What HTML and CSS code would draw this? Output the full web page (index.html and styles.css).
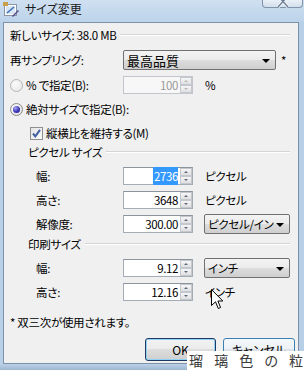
FILE: index.html
```html
<!DOCTYPE html>
<html lang="ja">
<head>
<meta charset="utf-8">
<title>サイズ変更</title>
<link rel="stylesheet" href="styles.css">
</head>
<body>
<div class="window">
	<!-- タイトルバー -->
	<div class="titlebar">
		<svg class="appicon" width="17" height="16" viewBox="0 0 17 16">
			<rect x="1.5" y="2.5" width="12" height="11" fill="#fdfdfd" stroke="#8a96a6"/>
			<rect x="3" y="4" width="9" height="8" fill="#d9e6f3"/>
			<path d="M4 11 L11 5" stroke="#3d6fb8" stroke-width="1.6"/>
			<path d="M9 14 L15 8 L16 9 L10 15 Z" fill="#5a4a8a"/>
			<rect x="0" y="0" width="5" height="4" fill="#c9a14a"/>
		</svg>
		<span class="title">サイズ変更</span>
		<div class="closebtn">
			<svg width="12" height="8" viewBox="0 0 12 8">
				<path d="M1 -4 L11 7 M11 -4 L1 7" stroke="#f4f7fb" stroke-width="3.2"/>
				<path d="M1 -4 L11 7 M11 -4 L1 7" stroke="#6f7f95" stroke-width="1.4"/>
			</svg>
		</div>
	</div>
	<!-- ダイアログ本体 -->
	<div class="client">
		<div class="row">
			<span class="info">新しいサイズ: 38.0 MB</span>
			<span class="rule"></span>
		</div>
		<div class="row loose">
			<span class="label">再サンプリング:</span>
			<div class="combo wide"><span class="text">最高品質</span><i class="arrow"></i></div>
			<span class="star">*</span>
		</div>
		<div class="row loose">
			<span class="label"><i class="radio off"></i>% で指定(B):</span>
			<div class="spin disabled">
				<span class="value">100</span>
				<span class="spinbtns"><i class="up"></i><i class="down"></i></span>
			</div>
			<span class="unit">%</span>
		</div>
		<div class="row">
			<span class="label"><i class="radio on"></i>絶対サイズで指定(B):</span>
		</div>
		<div class="row">
			<span class="label check-label"><i class="checkbox">
				<svg width="11" height="11" viewBox="0 0 11 11"><path d="M2 5.5 L4.3 8.3 L9 1.8" fill="none" stroke="#3f5fa0" stroke-width="2"/></svg>
			</i>縦横比を維持する(M)</span>
		</div>
		<div class="group first">
			<span>ピクセル サイズ</span>
			<span class="rule"></span>
		</div>
		<div class="row">
			<span class="label sub">幅:</span>
			<div class="spin">
				<span class="value"><em class="sel">2736</em></span>
				<span class="spinbtns"><i class="up"></i><i class="down"></i></span>
			</div>
			<span class="unit">ピクセル</span>
		</div>
		<div class="row">
			<span class="label sub">高さ:</span>
			<div class="spin">
				<span class="value">3648</span>
				<span class="spinbtns"><i class="up"></i><i class="down"></i></span>
			</div>
			<span class="unit">ピクセル</span>
		</div>
		<div class="row">
			<span class="label sub">解像度:</span>
			<div class="spin">
				<span class="value">300.00</span>
				<span class="spinbtns"><i class="up"></i><i class="down"></i></span>
			</div>
			<div class="combo small"><span class="text">ピクセル/インチ</span><i class="arrow"></i></div>
		</div>
		<div class="group">
			<span>印刷サイズ</span>
			<span class="rule"></span>
		</div>
		<div class="row">
			<span class="label sub">幅:</span>
			<div class="spin">
				<span class="value">9.12</span>
				<span class="spinbtns"><i class="up"></i><i class="down"></i></span>
			</div>
			<div class="combo small"><span class="text">インチ</span><i class="arrow"></i></div>
		</div>
		<div class="row">
			<span class="label sub">高さ:</span>
			<div class="spin">
				<span class="value">12.16</span>
				<span class="spinbtns"><i class="up"></i><i class="down"></i></span>
			</div>
			<span class="unit">インチ</span>
		</div>
		<div class="row note">* 双三次が使用されます。</div>
		<div class="buttons">
			<div class="button default">OK</div>
			<div class="button focus">キャンセル</div>
		</div>
	</div>
	<div class="frame-bottom"></div>
</div>

<!-- 透かし文字とマウスカーソル -->
<div class="watermark">瑠 璃 色 の 粒</div>
<svg class="cursor" width="13" height="21" viewBox="0 0 13 21">
	<path d="M0.5 0.5 L0.5 16.5 L4.5 12.8 L7.3 19.5 L9.6 18.5 L6.9 12 L11.8 12 Z" fill="#fff" stroke="#000" stroke-width="1"/>
</svg>
</body>
</html>
```

FILE: styles.css
```css
/* 全体 */
body {
	margin: 0;
	font-family: "Noto Sans CJK JP", sans-serif;
	font-size: 11.5px;
	letter-spacing: -0.3px;
	font-feature-settings: "palt";
	color: #000;
}
.window {
	width: 304px;
	height: 370px;
	background: linear-gradient(90deg, #b9d0e8, #c4d8ed 60%, #b7cee7);
	display: flex;
	flex-direction: column;
	overflow: hidden;
}
/* タイトルバー */
.titlebar {
	height: 22px;
	display: flex;
	align-items: flex-start;
	background: linear-gradient(180deg, #cfe0f1, #bcd3ea);
}
.appicon {
	margin: 2px 0 0 3px;
}
.title {
	margin: 1px 0 0 5px;
	line-height: 16px;
	font-size: 12px;
	letter-spacing: 0;
	color: #1a1a1a;
}
.closebtn {
	margin-left: auto;
	margin-right: 1px;
	width: 41px;
	height: 8px;
	box-sizing: border-box;
	border: 1px solid #8193ab;
	border-top: none;
	border-radius: 0 0 4px 4px;
	background: linear-gradient(180deg, #e9f0f7, #d3dfec);
	display: flex;
	justify-content: center;
}
/* 本体 */
.client {
	margin: 0 5px 0 3px;
	height: 338px;
	border: 1px solid #7d91a8;
	background-color: #f0f0f0;
	padding: 2px 8px 0 6px;
	display: flex;
	flex-direction: column;
}
.frame-bottom {
	flex: 1;
	background: linear-gradient(180deg, #bcd2e9, #9fb7d0);
}
.row {
	height: 20px;
	margin-top: 4px;
	display: flex;
	align-items: center;
	white-space: nowrap;
}
.row:first-child {
	margin-top: 0;
}
.row.loose {
	margin-top: 5px;
}
.row.note {
	margin-top: 10px;
}
.rule {
	flex: 1;
	height: 0;
	border-top: 1px solid #d5d5d5;
	border-bottom: 1px solid #fff;
	margin-left: 4px;
}
.label {
	width: 113px;
	flex: none;
	display: flex;
	align-items: center;
}
.label.sub {
	padding-left: 26px;
	box-sizing: border-box;
}
.check-label {
	width: auto;
	padding-left: 20px;
}
.star {
	margin-left: 5px;
}
.unit {
	margin-left: 12px;
}
/* グループ見出し */
.group {
	height: 16px;
	margin: 2px 0 2px 18px;
	display: flex;
	align-items: center;
	white-space: nowrap;
}
.group.first {
	margin-top: 1px;
}
/* ラジオボタン */
.radio {
	width: 11px;
	height: 11px;
	border: 1px solid #8a8a8a;
	border-radius: 50%;
	margin-right: 3px;
	background: radial-gradient(circle at 40% 35%, #ffffff, #dcdcdc);
	position: relative;
	flex: none;
}
.radio.off {
	border-color: #b5b5b5;
	background: radial-gradient(circle at 40% 35%, #fafafa, #e6e6e6);
}
.radio.on::after {
	content: "";
	position: absolute;
	left: 2px;
	top: 2px;
	width: 7px;
	height: 7px;
	border-radius: 50%;
	background: radial-gradient(circle at 35% 30%, #a7a4f2, #3a36b8 55%, #1d1a7a);
}
/* チェックボックス */
.checkbox {
	width: 11px;
	height: 11px;
	border: 1px solid #8f8f8f;
	background: linear-gradient(135deg, #e4e4e4, #fbfbfb);
	margin-right: 3px;
	display: flex;
	flex: none;
}
/* コンボボックス */
.combo {
	height: 20px;
	box-sizing: border-box;
	border: 1px solid #707070;
	border-radius: 2px;
	background: linear-gradient(180deg, #f3f3f3 0%, #ebebeb 50%, #dddddd 50%, #cfcfcf 100%);
	display: flex;
	align-items: center;
	overflow: hidden;
	flex: none;
}
.combo.wide {
	width: 153px;
}
.combo.small {
	width: 86px;
	margin-left: 11px;
}
.combo .text {
	flex: 1;
	padding-left: 3px;
	overflow: hidden;
	white-space: nowrap;
}
.combo.wide .text {
	font-size: 13px;
	letter-spacing: 0;
}
.arrow {
	width: 0;
	height: 0;
	border-left: 4px solid transparent;
	border-right: 4px solid transparent;
	border-top: 4px solid #000;
	margin: 1px 5px 0 2px;
	flex: none;
}
/* スピン付きテキストボックス */
.spin {
	width: 70px;
	height: 18px;
	box-sizing: border-box;
	border: 1px solid #a4acb6;
	border-top-color: #8c949e;
	background-color: #fff;
	display: flex;
	flex: none;
}
.spin .value {
	flex: 1;
	text-align: right;
	padding-right: 1px;
	font-size: 11.5px;
	line-height: 16px;
	letter-spacing: -0.4px;
}
.spin .sel {
	font-style: normal;
	background-color: #3399ff;
	color: #fff;
	padding: 1px 0 1px 1px;
}
.spin.disabled {
	border-color: #c2c6cc;
	background-color: #f7f7f7;
	color: #9a9a9a;
}
.spinbtns {
	width: 12px;
	display: flex;
	flex-direction: column;
	margin-left: 1px;
}
.spinbtns i {
	flex: 1;
	border: 1px solid #c3c8ce;
	background: linear-gradient(180deg, #f6f6f6, #e0e0e0);
	display: flex;
	justify-content: center;
	align-items: center;
}
.spinbtns i::after {
	content: "";
	border-left: 2px solid transparent;
	border-right: 2px solid transparent;
}
.spinbtns .up::after {
	border-bottom: 2px solid #5a6b80;
}
.spinbtns .down::after {
	border-top: 2px solid #5a6b80;
}
.spin.disabled .spinbtns i::after {
	border-top-color: #b8b8b8;
	border-bottom-color: #b8b8b8;
}
/* ボタン */
.buttons {
	margin-top: 6px;
	height: 23px;
	display: flex;
	justify-content: flex-end;
	gap: 7px;
	margin-right: -5px;
}
.button {
	width: 71px;
	box-sizing: border-box;
	border: 1px solid #707070;
	border-radius: 3px;
	background: linear-gradient(180deg, #f2f2f2 0%, #ebebeb 50%, #dddddd 50%, #cfcfcf 100%);
	text-align: center;
	line-height: 21px;
	font-size: 12px;
	letter-spacing: 0;
}
.button.default {
	border-color: #1f3b63;
	box-shadow: inset 0 0 0 1px #8fd2f5;
}
.button.focus {
	width: 72px;
	border-color: #3c7fb1;
	background: linear-gradient(180deg, #f4f8fb 0%, #ecf1f5 50%, #dde3e8 50%, #d0d7dd 100%);
}
/* 透かし */
.watermark {
	position: absolute;
	left: 187px;
	top: 351px;
	right: 0;
	bottom: 0;
	background-color: #fff;
	color: #3a3a3a;
	font-size: 14px;
	line-height: 19px;
	padding-left: 2px;
	letter-spacing: 4px;
	white-space: nowrap;
	overflow: hidden;
}
.cursor {
	position: absolute;
	left: 211px;
	top: 289px;
}
```
